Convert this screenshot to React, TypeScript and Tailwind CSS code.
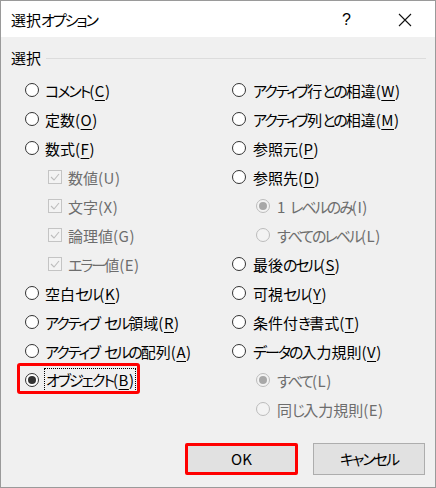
import React from "react";

const FONT = "[font-family:'Noto_Sans_CJK_JP','Noto_Sans',sans-serif] [font-feature-settings:'palt']";

function JP({ s }: { s: string }) {
  const runs = s.match(/[\u3040-\u30ff]+| +|[^\u3040-\u30ff ]+/g) || [];
  return (
    <>
      {runs.map((r, i) =>
        /[\u3040-\u30ff]/.test(r) ? (
          <span key={i} className="tracking-[-2px]">
            {r}
          </span>
        ) : r.trim() === "" ? (
          <span key={i} className="tracking-[1.5px]">
            {r}
          </span>
        ) : (
          <span key={i}>{r}</span>
        )
      )}
    </>
  );
}

function Radio({ checked = false, disabled = false }: { checked?: boolean; disabled?: boolean }) {
  return (
    <span
      className={
        "flex h-[14px] w-[14px] shrink-0 items-center justify-center rounded-full border " +
        (disabled ? "border-[#bcbcbc] bg-[#f3f3f3]" : "border-[#333333] bg-white")
      }
    >
      {checked && (
        <span className={"h-[8px] w-[8px] rounded-full " + (disabled ? "bg-[#a8a8a8]" : "bg-[#333333]")} />
      )}
    </span>
  );
}

function Check() {
  return (
    <span className="flex h-[14px] w-[14px] shrink-0 items-center justify-center border border-[#c4c4c4] bg-[#f3f3f3]">
      <svg width="12" height="12" viewBox="0 0 12 12" fill="none">
        <polyline points="2,6 5,9 10,3" stroke="#bcbcbc" strokeWidth="1.1" />
      </svg>
    </span>
  );
}

function Label({ text, k, disabled = false }: { text: string; k: string; disabled?: boolean }) {
  return (
    <span className={"whitespace-pre text-[15px] leading-[20px] " + (disabled ? "text-[#6d6d6d]" : "text-black")}>
      <JP s={text} />
      <span className="tracking-[0.5px]">
        (
        {disabled ? k : <span className="underline decoration-1 underline-offset-[3px]">{k}</span>})
      </span>
    </span>
  );
}

function RadioRow({ text, k, gap = "ml-[6px]" }: { text: string; k: string; gap?: string }) {
  return (
    <div className="flex h-[29px] items-center">
      <Radio />
      <span className={gap}>
        <Label text={text} k={k} />
      </span>
    </div>
  );
}

function CheckRow({ text, k }: { text: string; k: string }) {
  return (
    <div className="flex h-[29px] items-center pl-[23px]">
      <Check />
      <span className="ml-[6px]">
        <Label text={text} k={k} disabled />
      </span>
    </div>
  );
}

function SubRadioRow({ text, k, checked = false }: { text: string; k: string; checked?: boolean }) {
  return (
    <div className="flex h-[29px] items-center pl-[24px]">
      <Radio disabled checked={checked} />
      <span className="ml-[7px]">
        <Label text={text} k={k} disabled />
      </span>
    </div>
  );
}

export default function App() {
  return (
    <div className={"flex h-[488px] w-[436px] flex-col border border-[#9a9a9a] bg-[#f0f0f0] " + FONT}>
      {/* title bar */}
      <div className="flex h-[36px] shrink-0 items-center bg-white pl-[10px] pt-[1px]">
        <span className="text-[15px] leading-[20px] text-black">
          <JP s="選択オプション" />
        </span>
        <span className="ml-auto mr-[47px] text-[16px] leading-[20px] text-black [font-family:'Liberation_Sans',sans-serif]">?</span>
        <svg width="14" height="14" viewBox="0 0 14 14" className="mr-[23px]">
          <path d="M1 1 L13 13 M13 1 L1 13" stroke="#111" strokeWidth="1.1" />
        </svg>
      </div>

      {/* group header */}
      <div className="mt-[10px] flex h-[22px] items-center pl-[10px] pr-[9px]">
        <span className="text-[15px] leading-[20px] text-black">選択</span>
        <span className="ml-[5px] h-px flex-1 bg-[#dcdcdc]" />
      </div>

      {/* options */}
      <div className="mt-[6px] flex">
        <div className="w-[231px] pl-[24px]">
          <RadioRow text="コメント" k="C" />
          <RadioRow text="定数" k="O" />
          <RadioRow text="数式" k="F" />
          <CheckRow text="数値" k="U" />
          <CheckRow text="文字" k="X" />
          <CheckRow text="論理値" k="G" />
          <CheckRow text="エラー値" k="E" />
          <RadioRow text="空白セル" k="K" />
          <RadioRow text="アクティブ セル領域" k="R" />
          <RadioRow text="アクティブ セルの配列" k="A" />
          <div className="relative flex h-[29px] items-center">
            <span className="pointer-events-none absolute left-[-8px] top-[-2px] h-[31px] w-[123px] rounded-[3px] border-[3px] border-[#ff0000]" />
            <Radio checked />
            <span className="ml-[5px] flex h-[24px] items-center border border-dotted border-black px-[1px]">
              <Label text="オブジェクト" k="B" />
            </span>
          </div>
        </div>
        <div className="flex-1">
          <RadioRow text="アクティブ行との相違" k="W" gap="ml-[7px]" />
          <RadioRow text="アクティブ列との相違" k="M" gap="ml-[7px]" />
          <RadioRow text="参照元" k="P" gap="ml-[7px]" />
          <RadioRow text="参照先" k="D" gap="ml-[7px]" />
          <SubRadioRow text="1 レベルのみ" k="I" checked />
          <SubRadioRow text="すべてのレベル" k="L" />
          <RadioRow text="最後のセル" k="S" gap="ml-[7px]" />
          <RadioRow text="可視セル" k="Y" gap="ml-[7px]" />
          <RadioRow text="条件付き書式" k="T" gap="ml-[7px]" />
          <RadioRow text="データの入力規則" k="V" gap="ml-[7px]" />
          <SubRadioRow text="すべて" k="L" checked />
          <SubRadioRow text="同じ入力規則" k="E" />
        </div>
      </div>

      {/* buttons */}
      <div className="mt-auto flex justify-end gap-[15px] pb-[12px] pr-[10px]">
        <button className="flex h-[32px] w-[113px] items-center justify-center rounded-[2px] border-[3px] border-[#ff0000] bg-[#e1e1e1] text-[15px] leading-[20px] text-black">
          OK
        </button>
        <button className="flex h-[32px] w-[112px] items-center justify-center border border-[#adadad] bg-[#e1e1e1] text-[15px] leading-[20px] text-black">
          <JP s="キャンセル" />
        </button>
      </div>
    </div>
  );
}
